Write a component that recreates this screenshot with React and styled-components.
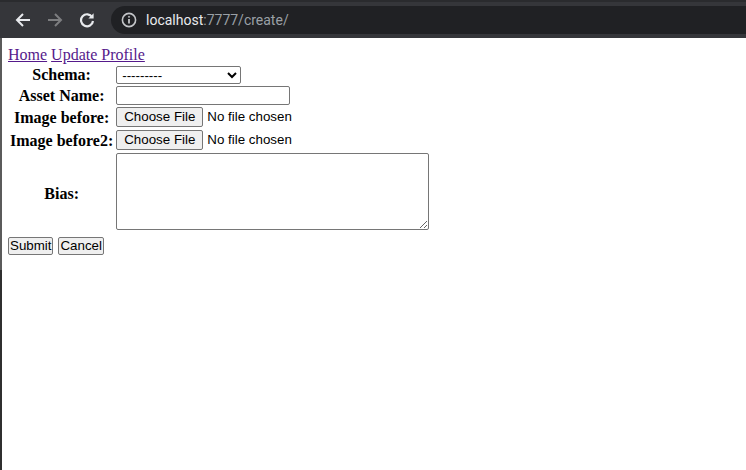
import React from "react";
import styled, { createGlobalStyle } from "styled-components";

const Global = createGlobalStyle`
  html, body {
    margin: 0;
    padding: 0;
    background: #fff;
  }
  body {
    width: 746px;
    height: 470px;
    overflow: hidden;
  }
`;

const Window = styled.div`
  width: 746px;
  height: 470px;
  display: flex;
  flex-direction: column;
  background: #fff;
`;

const Toolbar = styled.div`
  height: 38px;
  flex-shrink: 0;
  background: #35363a;
  border-top: 2px solid #2a2b2e;
  box-sizing: border-box;
  display: flex;
  align-items: center;
  padding-left: 13px;
`;

const NavButton = styled.div`
  width: 20px;
  height: 20px;
  display: flex;
  align-items: center;
  justify-content: center;
  margin-right: 12px;
  color: ${(p) => (p.$dim ? "#7d7e80" : "#e8eaed")};
`;

const Omnibox = styled.div`
  margin-left: 2px;
  flex: 1;
  height: 28px;
  border-radius: 14px 0 0 14px;
  background: #202124;
  display: flex;
  align-items: center;
  padding-left: 10px;
  font-family: Roboto, "Liberation Sans", sans-serif;
  font-size: 14px;
`;

const Host = styled.span`
  color: #e8eaed;
  margin-left: 9px;
`;

const Path = styled.span`
  color: #9aa0a6;
`;

const Viewport = styled.div`
  flex: 1;
  display: flex;
`;

const Edge = styled.div`
  width: 2px;
  flex-shrink: 0;
  background: linear-gradient(#5b5b5b 0, #5b5b5b 232px, #2f2f2f 232px);
`;

const Page = styled.div`
  flex: 1;
  padding: 8px 6px;
  font-family: "Liberation Serif", "Times New Roman", serif;
  font-size: 16px;
  color: #000;
`;

const Nav = styled.div`
  line-height: 18px;
  a {
    color: #551a8b;
    text-decoration: underline;
  }
`;

const FormTable = styled.table`
  border-spacing: 2px;
  th {
    padding: 0;
    font-weight: bold;
    text-align: center;
    vertical-align: middle;
    white-space: nowrap;
    line-height: 18px;
  }
  td {
    padding: 0 0 0 1px;
  }
`;

const control = `
  font-family: "Liberation Sans", Arial, sans-serif;
  font-size: 13.33px;
  color: #000;
`;

const Select = styled.select`
  ${control}
  display: block;
  width: 125px;
  height: 18px;
  padding: 0 0 0 1px;
  border: 1px solid #767676;
  border-radius: 2px;
  background: #fff;
`;

const TextInput = styled.input`
  ${control}
  display: block;
  width: 174px;
  height: 19px;
  box-sizing: border-box;
  padding: 1px 2px;
  border: 1px solid #767676;
  border-radius: 2px;
`;

const FileRow = styled.div`
  ${control}
  display: flex;
  align-items: flex-start;
  gap: 4px;
  height: 21px;
  line-height: 20px;
`;

const Button = styled.button`
  ${control}
  height: ${(p) => (p.$h ? p.$h : 18)}px;
  padding: 0 ${(p) => (p.$px ? p.$px : 6)}px;
  border: 1px solid #767676;
  border-radius: 2px;
  background: #efefef;
  line-height: 1;
`;

const TextArea = styled.textarea`
  ${control}
  display: block;
  width: 313px;
  height: 77px;
  margin-bottom: 4px;
  box-sizing: border-box;
  border: 1px solid #767676;
  border-radius: 2px;
  resize: both;
`;

const Actions = styled.div`
  display: flex;
  gap: 5px;
  margin-top: 1px;
`;

const FileInput = () => (
  <FileRow>
    <Button $h={20} $px={7}>Choose File</Button>
    <span>No file chosen</span>
  </FileRow>
);

export default function App() {
  return (
    <Window>
      <Global />
      <Toolbar>
        <NavButton>
          <svg width="16" height="16" viewBox="0 0 16 16" fill="none" stroke="currentColor" strokeWidth="2">
            <path d="M15 8H2M8 2L2 8l6 6" />
          </svg>
        </NavButton>
        <NavButton $dim>
          <svg width="16" height="16" viewBox="0 0 16 16" fill="none" stroke="currentColor" strokeWidth="2">
            <path d="M1 8h13M8 2l6 6-6 6" />
          </svg>
        </NavButton>
        <NavButton>
          <svg width="16" height="16" viewBox="0 0 16 16" fill="none" stroke="currentColor" strokeWidth="2.2">
            <path d="M13.2 5.2A6 6 0 1 0 14 9" />
            <path d="M14.6 1.2v5.2H9.4z" fill="currentColor" strokeWidth="0" />
          </svg>
        </NavButton>
        <Omnibox>
          <svg width="16" height="16" viewBox="0 0 16 16" fill="none" stroke="#c4c6c9" strokeWidth="1.6">
            <circle cx="8" cy="8" r="6.6" />
            <path d="M8 7v4.4" strokeWidth="1.8" />
            <circle cx="8" cy="4.8" r="0.6" fill="#c4c6c9" strokeWidth="0.8" />
          </svg>
          <Host>localhost</Host>
          <Path>:7777/create/</Path>
        </Omnibox>
      </Toolbar>
      <Viewport>
        <Edge />
        <Page>
          <Nav>
            <a href="#home">Home</a> <a href="#profile">Update Profile</a>
          </Nav>
          <FormTable>
            <tbody>
              <tr>
                <th>Schema:</th>
                <td>
                  <Select defaultValue="">
                    <option value="">---------</option>
                  </Select>
                </td>
              </tr>
              <tr>
                <th>Asset Name:</th>
                <td>
                  <TextInput type="text" />
                </td>
              </tr>
              <tr>
                <th>Image before:</th>
                <td>
                  <FileInput />
                </td>
              </tr>
              <tr>
                <th>Image before2:</th>
                <td>
                  <FileInput />
                </td>
              </tr>
              <tr>
                <th>Bias:</th>
                <td>
                  <TextArea />
                </td>
              </tr>
            </tbody>
          </FormTable>
          <Actions>
            <Button $px={1}>Submit</Button>
            <Button $px={1}>Cancel</Button>
          </Actions>
        </Page>
      </Viewport>
    </Window>
  );
}
